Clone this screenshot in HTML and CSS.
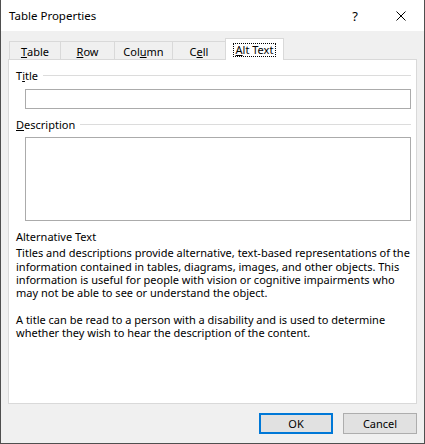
FILE: index.html
```html
<!DOCTYPE html>
<html lang="en">
<head>
<meta charset="utf-8">
<title>Table Properties</title>
<link rel="stylesheet" href="styles.css">
</head>
<body>
<div class="window">
  <div class="titlebar">
    <span class="title">Table Properties</span>
    <span class="tb-btn help">?</span>
    <span class="tb-btn close">
      <svg width="10" height="10" viewBox="0 0 10 10"><path d="M0.5 0.5 L9.5 9.5 M9.5 0.5 L0.5 9.5" stroke="#000" stroke-width="1" fill="none"/></svg>
    </span>
  </div>
  <div class="client">
    <div class="tabs">
      <div class="tab tab-table"><u>T</u>able</div>
      <div class="tab tab-row"><u>R</u>ow</div>
      <div class="tab tab-column">Col<u>u</u>mn</div>
      <div class="tab tab-cell">C<u>e</u>ll</div>
      <div class="tab tab-alt selected"><span class="focus"><u>A</u>lt Text</span></div>
    </div>
    <div class="panel">
      <div class="group-head"><span>T<u>i</u>tle</span><span class="rule"></span></div>
      <input class="field title-field" type="text">
      <div class="group-head desc-head"><span><u>D</u>escription</span><span class="rule"></span></div>
      <textarea class="field desc-field"></textarea>
      <div class="alt-head">Alternative Text</div>
      <p class="info">Titles and descriptions provide alternative, text-based representations of the information contained in tables, diagrams, images, and other objects. This information is useful for people with vision or cognitive impairments who may not be able to see or understand the object.</p>
      <p class="info info2">A title can be read to a person with a disability and is used to determine whether they wish to hear the description of the content.</p>
    </div>
    <div class="buttons">
      <button class="btn default">OK</button>
      <button class="btn">Cancel</button>
    </div>
  </div>
</div>
</body>
</html>
```
FILE: styles.css
```css
* { box-sizing: border-box; }
html, body { margin: 0; padding: 0; background: #ffffff; }
body {
  font-family: "Noto Sans", "Open Sans", sans-serif;
  font-size: 11px;
  color: #000;
}
.window {
  width: 425px;
  height: 444px;
  display: flex;
  flex-direction: column;
  background: #f0f0f0;
  border-left: 1px solid #4f4f4f;
  border-right: 1px solid #4f4f4f;
  border-bottom: 1px solid #4f4f4f;
}
.titlebar {
  height: 31px;
  flex: none;
  background: #ffffff;
  display: flex;
  align-items: center;
  padding-left: 8px;
}
.title { font-size: 11.5px; flex: 1; }
.tb-btn {
  width: 46px;
  height: 31px;
  display: flex;
  align-items: center;
  justify-content: center;
}
.help { font-size: 13px; }
.close svg { display: block; }
.client {
  flex: 1;
  display: flex;
  flex-direction: column;
  padding: 7px 7px 0 7px;
}
.tabs {
  display: flex;
  align-items: flex-end;
  height: 21px;
  padding-left: 1px;
  position: relative;
  z-index: 1;
}
.tab {
  height: 18px;
  border: 1px solid #d9d9d9;
  border-bottom: none;
  margin-left: -1px;
  display: flex;
  align-items: center;
  justify-content: center;
  padding-top: 1px;
  background: #f0f0f0;
}
.tab-table { width: 52px; margin-left: 0; }
.tab-row { width: 55px; }
.tab-column { width: 59px; }
.tab-cell { width: 54px; }
.tab-alt { width: 59px; }
.tab.selected {
  height: 22px;
  margin-bottom: -1px;
  background: #ffffff;
  padding-top: 0;
  position: relative;
}
.focus {
  border: 1px dotted #000;
  padding: 0 2px;
  line-height: 11px;
  height: 14px;
  display: flex;
  align-items: center;
}
.panel {
  height: 345px;
  flex: none;
  background: #ffffff;
  border: 1px solid #d9d9d9;
  padding: 9px 5px 0 7px;
  display: flex;
  flex-direction: column;
}
.group-head {
  display: flex;
  align-items: center;
  height: 13px;
  gap: 5px;
}
.rule {
  flex: 1;
  height: 1px;
  background: #dcdcdc;
}
.field {
  display: block;
  margin: 0 0 0 9px;
  border: 1px solid #ababab;
  background: #fff;
  font: inherit;
  padding: 0;
  resize: none;
  outline: none;
}
.title-field { margin-top: 7px; height: 20px; }
.desc-head { margin-top: 9px; }
.desc-field { margin-top: 6px; height: 84px; }
.alt-head { margin-top: 9px; line-height: 13.33px; }
.info {
  margin: 3px 0 0 0;
  line-height: 13.33px;
}
.info2 { margin-top: 13px; }
.buttons {
  display: flex;
  justify-content: flex-end;
  gap: 10px;
  margin-top: 9px;
}
.btn {
  width: 74px;
  height: 21px;
  background: #e1e1e1;
  border: 1px solid #adadad;
  font: inherit;
  color: #000;
  padding: 0;
}
.btn.default { border: 2px solid #0078d7; }
```
